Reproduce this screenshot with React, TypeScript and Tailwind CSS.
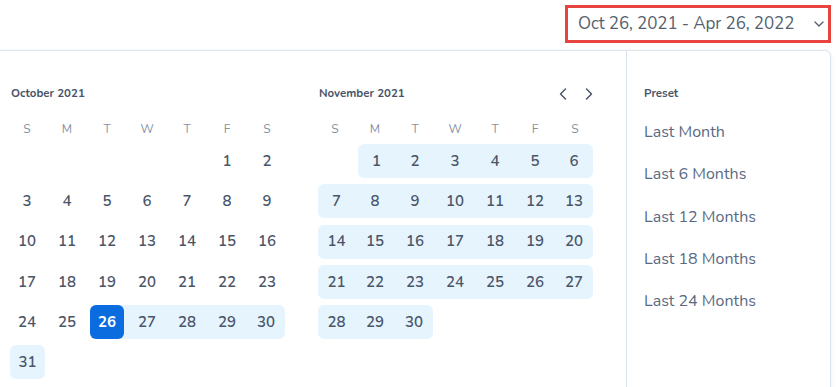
import { ChevronDown, ChevronLeft, ChevronRight } from 'lucide-react';

type Cell = { day: number | null; inRange: boolean; start: boolean };

const WEEK = ['S', 'M', 'T', 'W', 'T', 'F', 'S'];
const PRESETS = ['Last Month', 'Last 6 Months', 'Last 12 Months', 'Last 18 Months', 'Last 24 Months'];

// build rows for a month; offset = weekday of day 1
function buildRows(offset: number, days: number, rangeFrom: number, startDay: number | null): Cell[][] {
  const cells: Cell[] = [];
  for (let i = 0; i < offset; i++) cells.push({ day: null, inRange: false, start: false });
  for (let d = 1; d <= days; d++) {
    cells.push({ day: d, inRange: d >= rangeFrom, start: d === startDay });
  }
  const rows: Cell[][] = [];
  for (let i = 0; i < cells.length; i += 7) rows.push(cells.slice(i, i + 7));
  return rows;
}

function MonthGrid({ title, rows, nav }: { title: string; rows: Cell[][]; nav?: boolean }) {
  return (
    <div className="w-[280px]">
      <div className="h-4 flex items-center justify-between">
        <span className="text-[11.5px] font-bold text-[#4a5568] pl-[4px]">{title}</span>
        {nav && (
          <div className="flex items-center gap-[6px] mr-[-4px] text-[#4a5568]">
            <ChevronLeft size={20} strokeWidth={1.75} />
            <ChevronRight size={20} strokeWidth={1.75} />
          </div>
        )}
      </div>
      <div className="mt-[17px] grid grid-cols-7 h-5 items-center">
        {WEEK.map((w, i) => (
          <span key={i} className="text-center text-[12px] text-[#8792a2]">{w}</span>
        ))}
      </div>
      <div className="mt-[5px] flex flex-col gap-[6.25px]">
        {rows.map((row, r) => (
          <div key={r} className="grid grid-cols-7 h-[34px]">
            {row.map((c, i) => {
              if (c.day === null) return <span key={i} />;
              const prev = row[i - 1];
              const next = row[i + 1];
              const leftEdge = !prev || !prev.inRange || prev.day === null;
              const rightEdge = !next || !next.inRange;
              if (c.start) {
                return (
                  <span key={i} className="flex items-center justify-center bg-[linear-gradient(to_right,transparent_50%,#e6f4fe_50%)]">
                    <span className="w-[34px] h-[34px] rounded-md bg-[#0b6ce0] text-white font-bold text-[15px] flex items-center justify-center">
                      {c.day}
                    </span>
                  </span>
                );
              }
              return (
                <span
                  key={i}
                  className={`flex items-center justify-center text-[15px] font-semibold text-[#4a5568] ${c.inRange ? 'bg-[#e6f4fe]' : ''} ${c.inRange && leftEdge ? 'rounded-l-md ml-[3px]' : ''} ${c.inRange && rightEdge ? 'rounded-r-md mr-[2px]' : ''}`}
                >
                  {c.day}
                </span>
              );
            })}
          </div>
        ))}
      </div>
    </div>
  );
}

export default function App() {
  const october = buildRows(5, 31, 26, 26);
  const november = buildRows(1, 30, 1, null);

  return (
    <div className="w-[837px] h-[387px] overflow-hidden bg-white font-['Nunito','Open_Sans',sans-serif]">
      <div className="flex justify-end pt-[5px] pr-[6px]">
        <div className="w-[266px] h-[38px] border-[3px] border-[#e8443f] flex items-center pl-[10px] pr-[1px] text-[17px] text-[#555f6e]">
          <span className="flex-1 tracking-[-0.1px]">Oct 26, 2021 - Apr 26, 2022</span>
          <ChevronDown size={16} strokeWidth={2} className="text-[#555f6e]" />
        </div>
      </div>

      <div className="mt-[7px] -ml-[14px] mr-[6px] h-[400px] border border-[#dbe3ee] rounded-tr-md shadow-[0_1px_4px_rgba(30,50,90,0.08)] flex">
        <div className="w-[639px] pl-[20px] pt-[35px] flex gap-[28px]">
          <MonthGrid title="October 2021" rows={october} />
          <MonthGrid title="November 2021" rows={november} nav />
        </div>
        <div className="flex-1 border-l border-[#dbe3ee] pl-[17px] pt-[35px]">
          <div className="h-4 flex items-center text-[11.5px] font-bold text-[#4a5568]">Preset</div>
          <div className="mt-[9px] flex flex-col">
            {PRESETS.map((p) => (
              <div key={p} className="h-[42.3px] flex items-center text-[16px] text-[#5b6a82]">
                {p}
              </div>
            ))}
          </div>
        </div>
      </div>
    </div>
  );
}
